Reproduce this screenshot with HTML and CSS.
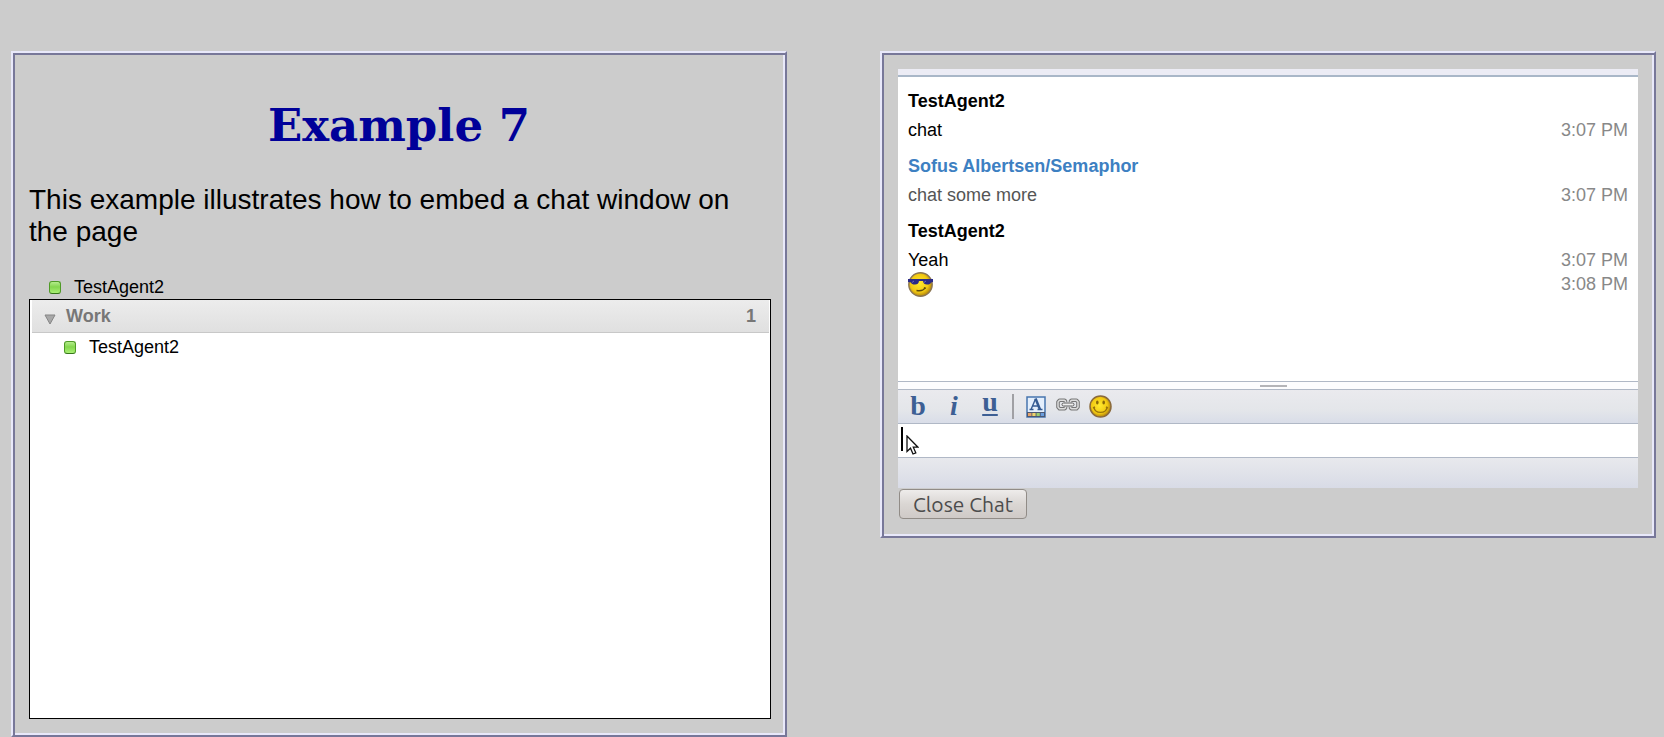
FILE: index.html
```html
<!DOCTYPE html>
<html lang="en">
<head>
<meta charset="UTF-8">
<meta name="viewport" content="width=device-width, initial-scale=1.0">
<title>Example 7</title>
<link rel="stylesheet" href="styles.css">
</head>
<body>

<main class="page">
  <!-- Contact list -->
  <section class="panel">
    <h1>Example 7</h1>
    <p class="intro">This example illustrates how to embed a chat window on the page</p>

    <div class="contact own-status"><span class="presence"></span>TestAgent2</div>

    <div class="contact-list">
      <div class="group-header">
        <svg class="arrow" width="12" height="11" viewBox="0 0 12 11"><path d="M1 1h10L6 10z" fill="#a8a8a8" stroke="#858585"/></svg>
        <span class="group-name">Work</span>
        <span class="group-count">1</span>
      </div>
      <div class="contact member"><span class="presence"></span>TestAgent2</div>
    </div>
  </section>

  <!-- Chat window -->
  <section class="panel">
    <div class="chat">
      <div class="messages">
        <h2>TestAgent2</h2>
        <div class="message"><span>chat</span><time>3:07 PM</time></div>
        <h2 class="remote">Sofus Albertsen/Semaphor</h2>
        <div class="message quiet"><span>chat some more</span><time>3:07 PM</time></div>
        <h2>TestAgent2</h2>
        <div class="message"><span>Yeah</span><time>3:07 PM</time></div>
        <div class="message">
          <svg width="25" height="25" viewBox="0 0 25 25">
            <defs>
              <radialGradient id="face" cx="45%" cy="45%" r="58%">
                <stop offset="0" stop-color="#ffe92e"/>
                <stop offset="0.65" stop-color="#f2c913"/>
                <stop offset="1" stop-color="#a8790c"/>
              </radialGradient>
            </defs>
            <circle cx="12.5" cy="12.5" r="11.7" fill="url(#face)" stroke="#8b7652" stroke-width="1.4"/>
            <path d="M0 7h25v3l-2 .5c-.5 1.500-1.500 2-4 2-2.500 0-3.500-.8-4-3.500h-4c-.5 2.700-1.500 3.500-4 3.500s-3.500-.5-4-2L0 10z" fill="#2b2a86"/>
            <path d="M4 10.500l2-1.500M16 10.500l2-1.500" stroke="#6b6ab8" fill="none"/>
            <path d="M8.500 18.500c3 .5 7 .3 8.500-2.500M16 15.500l2 .8" stroke="#5d4a0c" stroke-width="1.300" fill="none"/>
          </svg>
          <time>3:08 PM</time>
        </div>
      </div>
      <div class="splitter"></div>

      <div class="toolbar">
        <button type="button" class="style-button" aria-label="Bold">b</button>
        <button type="button" class="style-button italic" aria-label="Italic">i</button>
        <button type="button" class="style-button underline" aria-label="Underline">u</button>
        <span class="separator"></span>
        <button type="button" aria-label="Font and color">
          <svg width="20" height="22" viewBox="0 0 20 22">
            <rect x="1" y="1" width="18" height="20" fill="#e4effc" stroke="#4775ae" stroke-width="1.500"/>
            <path d="M5 13.500L9.500 3M7 10h6M3.500 13.500h4M11.500 13.500h5" fill="none" stroke="#355b92" stroke-width="1.400"/>
            <path d="M9.500 2.500l4.500 11" stroke="#355b92" stroke-width="2.500"/>
            <path d="M1 16h18v5H1z" fill="#4b5873"/>
            <path d="M2 17h3.500v3H2z" fill="#e5a36a"/>
            <path d="M6.300 17h3.300v3H6.300z" fill="#f0d46c"/>
            <path d="M10.500 17h3.300v3h-3.300z" fill="#9ccd70"/>
            <path d="M14.700 17h3.300v3h-3.300z" fill="#6a9ede"/>
          </svg>
        </button>
        <button type="button" class="link-button" aria-label="Insert link">
          <svg width="24" height="14" viewBox="0 0 24 14">
            <g fill="none" stroke="#777" stroke-width="3.600" stroke-linejoin="round">
              <path d="M9.500 4V3L8.500 2.300H3.500L2 4v5l1.500 1.700h5l1-.7V9"/>
              <path d="M14.500 4V3l1-.7h5L22 4v5l-1.500 1.700h-5l-1-.7V9"/>
            </g>
            <g fill="none" stroke="#ddd" stroke-width="1.500" stroke-linejoin="round">
              <path d="M9.500 4V3L8.500 2.300H3.500L2 4v5l1.500 1.700h5l1-.7V9"/>
              <path d="M14.500 4V3l1-.7h5L22 4v5l-1.500 1.700h-5l-1-.7V9"/>
            </g>
            <rect x="6" y="5" width="12" height="3" rx="1.500" fill="#eee" stroke="#5c5c5c"/>
          </svg>
        </button>
        <button type="button" aria-label="Insert smiley">
          <svg width="23" height="23" viewBox="0 0 23 23">
            <circle cx="11.500" cy="11.500" r="10.500" fill="url(#face)" stroke="#8a6a3c" stroke-width="1.500"/>
            <ellipse cx="8.300" cy="7.500" rx="1.300" ry="2" fill="#8a6808"/>
            <ellipse cx="14.700" cy="7.500" rx="1.300" ry="2" fill="#8a6808"/>
            <path d="M5 12.500c1 6.500 12 6.500 13 0M4 13l2-1M17 12l2 1" fill="none" stroke="#9a750b" stroke-width="1.400"/>
          </svg>
        </button>
      </div>

      <div class="compose">
        <input type="text" aria-label="Message">
        <span class="caret"></span>
        <svg class="pointer" width="13" height="20" viewBox="0 0 13 20"><path d="M1 1v15.500l3.500-3.300 2.500 5.800 2.800-1.200-2.500-5.600H12z" fill="#fff" stroke="#111" stroke-width="1.300"/></svg>
      </div>
      <div class="chat-footer"></div>
    </div>
    <button type="button" class="close-button">Close Chat</button>
  </section>
</main>

</body>
</html>
```
FILE: styles.css
```css
body {
  margin: 0;
  background-color: #ccc;
  color: #000;
  font-family: "Liberation Sans", Arial, sans-serif;
  font-size: 18px;
  line-height: 24px;
}

.page {
  display: grid;
  grid-template-columns: 1fr 1fr;
  align-items: start;
  gap: 93px;
  padding: 51px 8px 0 11px;
}

/* Two-tone ridge around both columns */
.panel {
  border: 2px solid;
  border-color: #e8e8fa #777799 #777799 #e8e8fa;
  box-shadow: inset 2px 2px #777799, inset -2px -2px #e8e8fa;
  padding: 16px;
}

h1 {
  margin: 29px 0 30px;
  color: #009;
  font-family: "DejaVu Serif", serif;
  font-size: 45px;
  line-height: 56px;
  text-align: center;
}

.intro {
  margin: 0 0 27px;
  font-size: 28px;
  line-height: 32px;
}

/* Contacts */
.contact {
  display: flex;
  align-items: center;
  gap: 13px;
  height: 24px;
}

.own-status {
  padding-left: 20px;
}

.member {
  margin-top: 2px;
  padding-left: 32px;
}

.presence {
  box-sizing: border-box;
  width: 12px;
  height: 13px;
  border: 1px solid #4f9a26;
  border-bottom-color: #37761a;
  border-radius: 3px;
  background: linear-gradient(#b4ec8c, #84d64e 45%, #a9f075);
}

.contact-list {
  height: 418px;
  margin-right: -2px;
  padding: 0 1px 0 2px;
  border: 1px solid #000;
  background-color: #fff;
}

.group-header {
  display: flex;
  align-items: center;
  height: 32px;
  padding: 0 13px 0 12px;
  border-bottom: 1px solid #c8c8c8;
  background: linear-gradient(#ececec, #e0e0e0);
  color: #777;
  font-weight: bold;
}

.arrow {
  margin-top: 7px;
}

.group-name {
  flex: 1;
  margin-left: 10px;
}

/* Chat */
.chat {
  border-top: 6px solid #ececf5;
}

.messages {
  height: 296px;
  padding: 8px 10px 0;
  border-top: 2px solid #a9b7c8;
  background-color: #fff;
}

.messages h2 {
  margin: 4px 0 5px;
  font-size: 18px;
  line-height: 24px;
}

.messages .message + h2 {
  margin-top: 12px;
}

.messages .remote {
  color: #3d80c2;
}

.message {
  display: flex;
  justify-content: space-between;
  height: 24px;
}

.quiet {
  color: #555;
}

.message time {
  color: #888;
}

.splitter {
  display: flex;
  align-items: center;
  justify-content: center;
  height: 7px;
  padding-left: 10px;
  border: 1px solid #b0b8c6;
  border-width: 1px 0;
  background-color: #fcfcfe;
}

.splitter::after {
  content: "";
  width: 27px;
  height: 2px;
  background-color: #b4b4b8;
}

.toolbar {
  display: flex;
  align-items: center;
  height: 33px;
  padding-left: 2px;
  border-bottom: 1px solid #b0b8c6;
  background: linear-gradient(#eaeaee, #e4e6ea 60%, #d9dde8);
}

.toolbar button {
  display: flex;
  align-items: center;
  justify-content: center;
  width: 32px;
  height: 32px;
  padding: 0;
  border: none;
  background: none;
}

.toolbar .link-button {
  padding-bottom: 3px;
}

.toolbar .style-button {
  width: 36px;
  padding-bottom: 2px;
  color: #3d5f94;
  font-family: "Liberation Serif", serif;
  font-size: 28px;
  font-weight: bold;
  line-height: 32px;
}

.toolbar .italic {
  font-style: italic;
}

.toolbar .underline {
  padding-bottom: 10px;
  text-decoration: underline;
  text-decoration-thickness: 2px;
  text-underline-offset: 3px;
}

.separator {
  width: 2px;
  height: 25px;
  margin: 0 6px 0 4px;
  background-color: #a0a0a4;
}

.compose {
  position: relative;
  height: 33px;
  border-bottom: 1px solid #b0b8c6;
  background-color: #fff;
}

.compose input {
  display: block;
  box-sizing: border-box;
  width: 100%;
  height: 100%;
  padding: 0 4px;
  border: none;
  outline: none;
  background: none;
  font: inherit;
}

.caret {
  position: absolute;
  top: 3px;
  left: 3px;
  width: 2px;
  height: 24px;
  background-color: #000;
}

.pointer {
  position: absolute;
  top: 11px;
  left: 8px;
}

.chat-footer {
  height: 30px;
  background: linear-gradient(#e8e9ed, #d8dbe6);
}

.close-button {
  display: block;
  height: 30px;
  margin: 1px;
  padding: 0 13px;
  border: 1px solid #918c87;
  border-radius: 4px;
  background: linear-gradient(#eeeceb, #dad6d3 50%, #cfcac7);
  color: #4c4c4c;
  font-family: Ubuntu, "Noto Sans", sans-serif;
  font-size: 21px;
  line-height: 28px;
}
```
